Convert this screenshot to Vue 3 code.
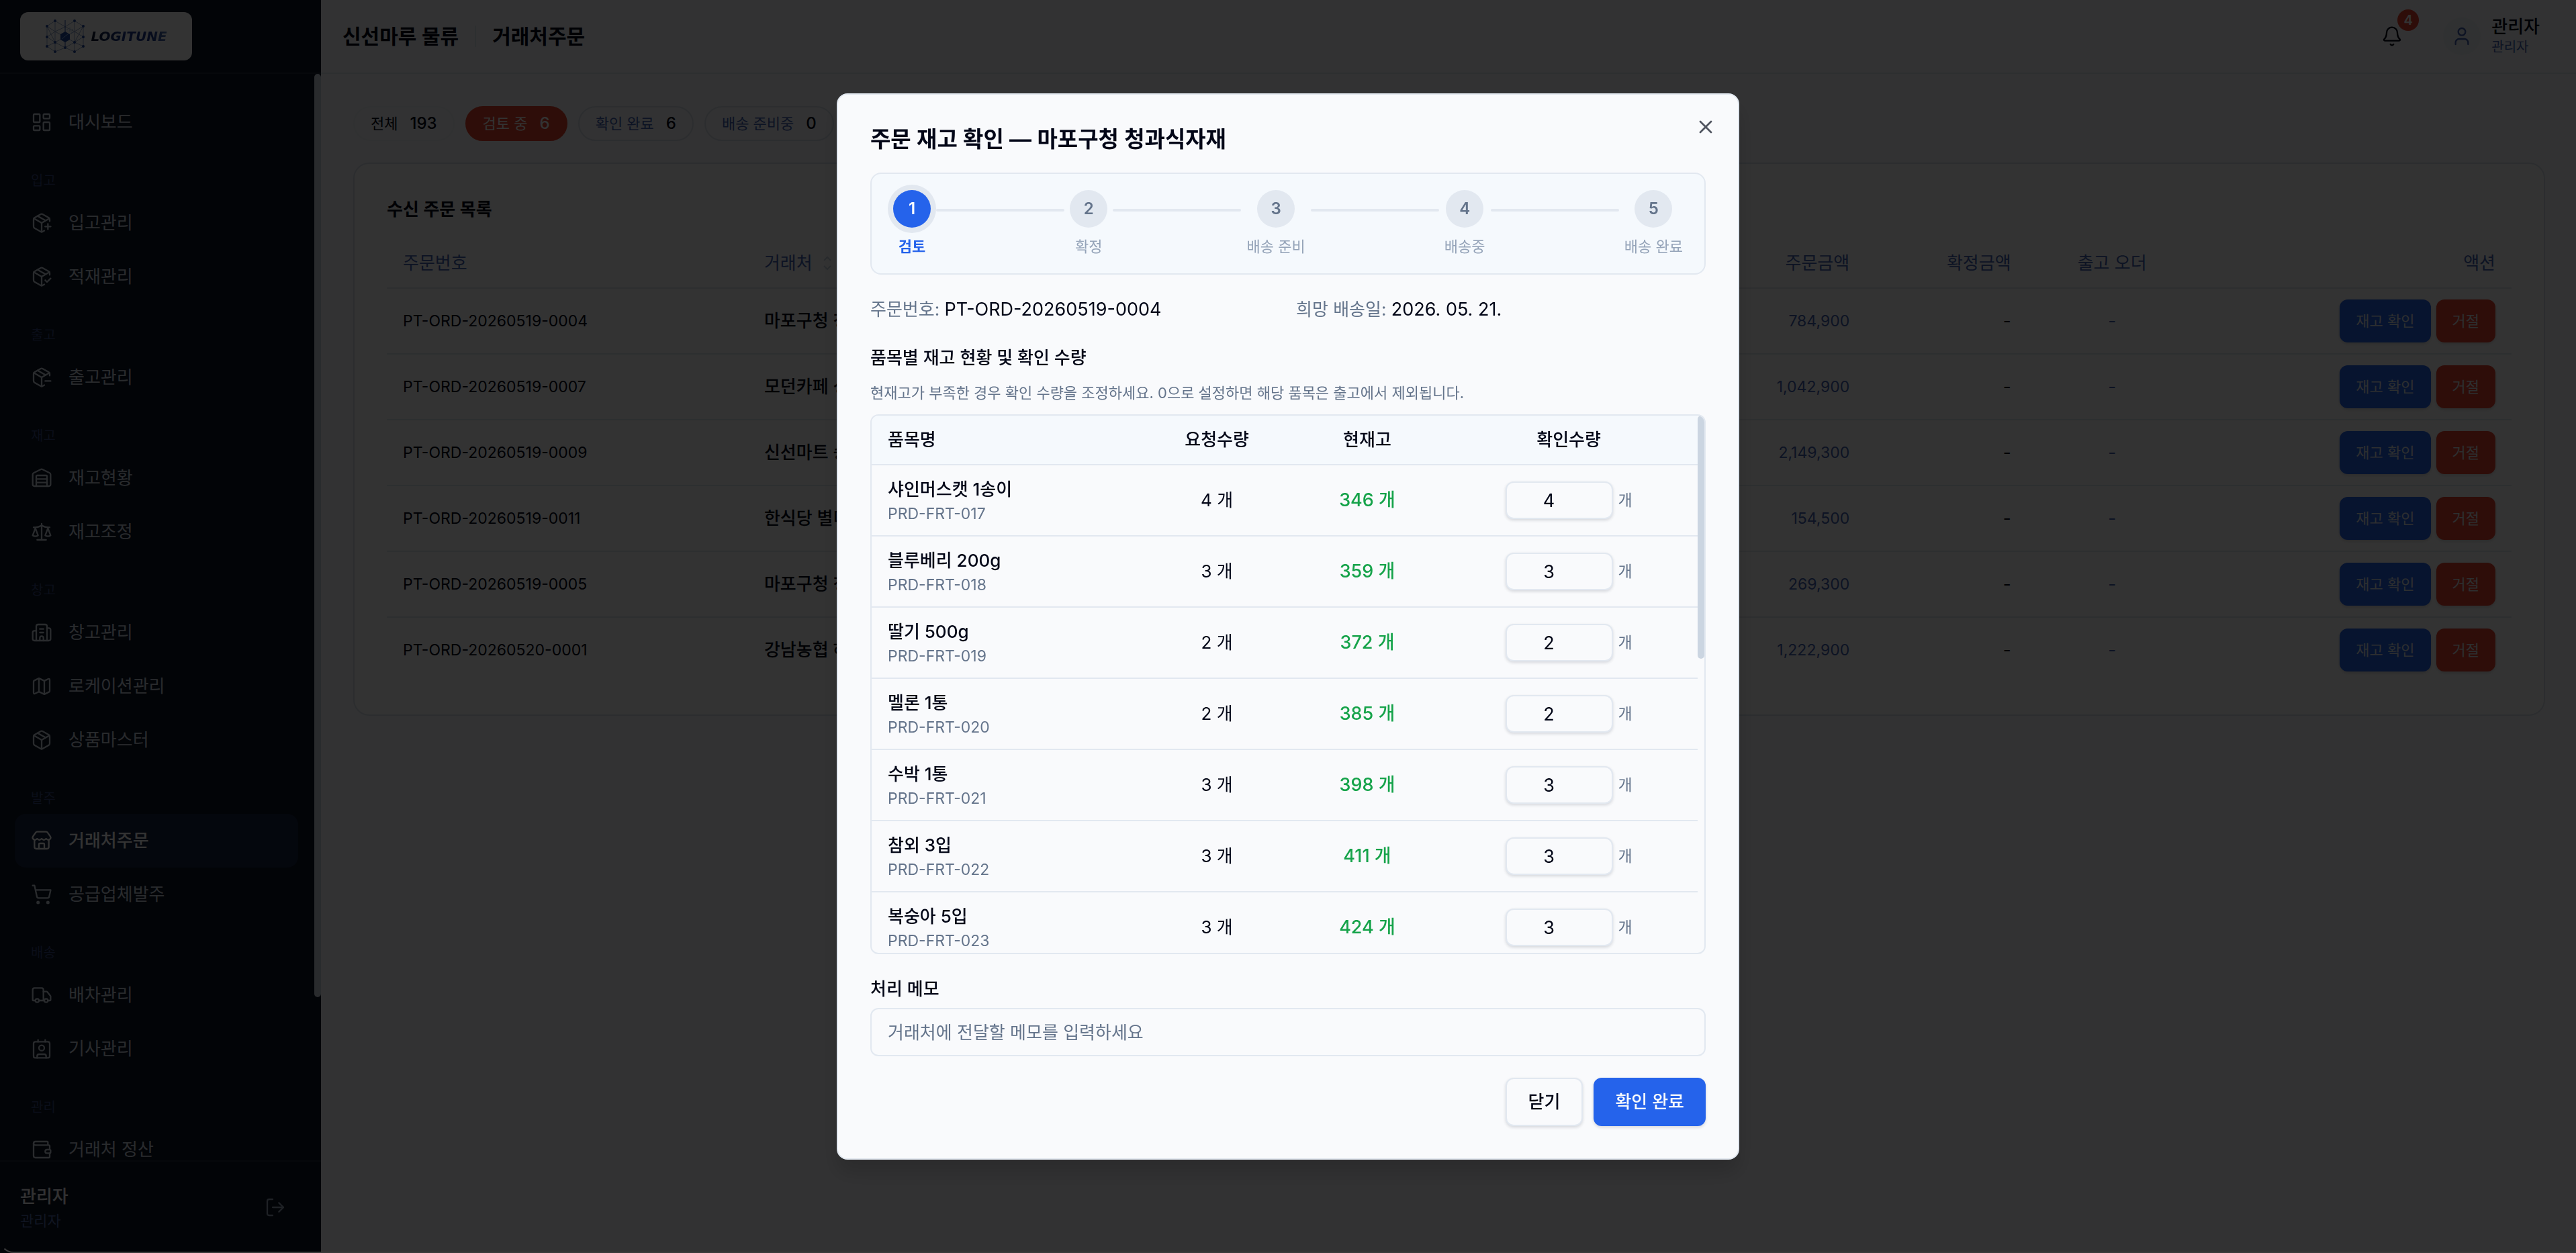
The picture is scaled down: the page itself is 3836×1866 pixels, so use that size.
<template>
  <div class="layout">
    <aside class="sidebar">
      <div class="sidebar-head">
        <a href="#" class="logo" aria-label="LOGITUNE">
          <svg class="logo-mark" viewBox="66 25 60 52" aria-hidden="true">
            <path class="mesh" d="M69 36 81 28 96 37 110 28 123 36V66L110 74 96 68 81 74 69 66ZM69 36 81 44 96 52 110 44 123 36M69 66 81 60 96 52 110 60 123 66M81 28V74M110 28V74M69 36 81 60 96 68 110 60 123 36M69 52 81 44 96 37 110 44 123 52 110 60M69 52 81 60" />
            <path class="spine" d="M96 27V68" />
            <path class="core" d="M96 44 103 48V56L96 60 89 56V48Z" />
            <path class="spark" d="M91 55 101 47M98 41h2M102 39h2M102 43h2M106 41h2M105 45h2" />
            <circle v-for="(node, i) in logoNodes" :key="i" :cx="node[0]" :cy="node[1]" r="2" />
          </svg>
          <span class="logo-text">LOGITUNE</span>
        </a>
      </div>

      <div class="nav-wrap">
        <nav class="nav">
          <div v-for="group in navGroups" :key="group.label" class="nav-group">
            <p v-if="group.label" class="nav-label">{{ group.label }}</p>
            <a
              v-for="item in group.items"
              :key="item.name"
              href="#"
              class="nav-item"
              :class="{ active: item.active }"
            >
              <svg class="icon" viewBox="0 0 24 24" aria-hidden="true">
                <path v-for="d in icons[item.icon]" :key="d" :d="d" />
              </svg>
              <span>{{ item.name }}</span>
            </a>
          </div>
        </nav>
        <div class="nav-scroll"><div class="nav-thumb"></div></div>
      </div>

      <div class="sidebar-foot">
        <div>
          <p class="foot-name">관리자</p>
          <p class="foot-role">관리자</p>
        </div>
        <button type="button" class="logout" aria-label="로그아웃">
          <svg class="icon" viewBox="0 0 24 24"><path v-for="d in icons.logout" :key="d" :d="d" /></svg>
        </button>
      </div>
    </aside>

    <main class="main">
      <header class="topbar">
        <div class="crumbs">
          <strong>신선마루 물류</strong>
          <span class="crumb-line"></span>
          <h1>거래처주문</h1>
        </div>
        <div class="top-actions">
          <button type="button" class="bell" aria-label="알림">
            <svg class="icon" viewBox="0 0 24 24"><path v-for="d in icons.bell" :key="d" :d="d" /></svg>
            <span class="badge">4</span>
          </button>
          <div class="profile">
            <span class="avatar">
              <svg class="icon" viewBox="0 0 24 24"><path v-for="d in icons.user" :key="d" :d="d" /></svg>
            </span>
            <div>
              <p class="profile-name">관리자</p>
              <p class="profile-role">관리자</p>
            </div>
          </div>
        </div>
      </header>

      <div class="content">
        <div class="filters">
          <button
            v-for="filter in filters"
            :key="filter.label"
            type="button"
            class="filter"
            :class="filter.type"
          >
            <span>{{ filter.label }}</span>
            <span class="count">{{ filter.count }}</span>
          </button>
        </div>

        <section class="card">
          <h2 class="card-title">수신 주문 목록</h2>
          <table class="orders">
            <colgroup>
              <col class="c-no" />
              <col />
              <col class="c-amount" />
              <col class="c-amount" />
              <col class="c-out" />
              <col class="c-action" />
            </colgroup>
            <thead>
              <tr>
                <th>주문번호</th>
                <th>
                  <span class="sortable">
                    거래처
                    <svg class="sort" viewBox="0 0 24 24"><path d="m7 16 5 5 5-5" /><path d="m7 8 5-5 5 5" /></svg>
                  </span>
                </th>
                <th class="right">주문금액</th>
                <th class="right">확정금액</th>
                <th class="center">출고 오더</th>
                <th class="right">액션</th>
              </tr>
            </thead>
            <tbody>
              <tr v-for="order in orders" :key="order.no">
                <td class="order-no">{{ order.no }}</td>
                <td class="partner">{{ order.partner }}</td>
                <td class="right amount">{{ order.amount }}</td>
                <td class="right">-</td>
                <td class="center muted">-</td>
                <td>
                  <div class="row-actions">
                    <button type="button" class="btn-small primary">재고 확인</button>
                    <button type="button" class="btn-small danger">거절</button>
                  </div>
                </td>
              </tr>
            </tbody>
          </table>
        </section>
      </div>
    </main>

    <div class="overlay">
      <div class="modal" role="dialog" aria-modal="true" aria-labelledby="modal-title">
        <button type="button" class="close" aria-label="창 닫기">
          <svg class="icon" viewBox="0 0 24 24"><path d="M18 6 6 18" /><path d="m6 6 12 12" /></svg>
        </button>
        <h2 id="modal-title" class="modal-title">주문 재고 확인 — 마포구청 청과식자재</h2>

        <div class="stepper">
          <template v-for="(step, index) in steps" :key="step">
            <div v-if="index > 0" class="step-line"></div>
            <div class="step" :class="{ current: index === 0 }">
              <span class="step-dot">{{ index + 1 }}</span>
              <span class="step-label">{{ step }}</span>
            </div>
          </template>
        </div>

        <div class="info">
          <p>주문번호: <span class="value">PT-ORD-20260519-0004</span></p>
          <p>희망 배송일: <span class="value">2026. 05. 21.</span></p>
        </div>

        <h3 class="section-title">품목별 재고 현황 및 확인 수량</h3>
        <p class="section-desc">
          현재고가 부족한 경우 확인 수량을 조정하세요. 0으로 설정하면 해당 품목은 출고에서 제외됩니다.
        </p>

        <div class="stock-box">
          <table class="stock">
            <colgroup>
              <col class="s-name" />
              <col class="s-req" />
              <col class="s-now" />
              <col class="s-qty" />
            </colgroup>
            <thead>
              <tr>
                <th class="left">품목명</th>
                <th>요청수량</th>
                <th>현재고</th>
                <th>확인수량</th>
              </tr>
            </thead>
            <tbody>
              <tr v-for="item in items" :key="item.code">
                <td class="left">
                  <p class="item-name">{{ item.name }}</p>
                  <p class="item-code">{{ item.code }}</p>
                </td>
                <td>{{ item.requested }} 개</td>
                <td class="in-stock">{{ item.stock }} 개</td>
                <td>
                  <div class="qty">
                    <input
                      v-model="item.confirmed"
                      type="text"
                      inputmode="numeric"
                      :aria-label="item.name + ' 확인수량'"
                    />
                    <span>개</span>
                  </div>
                </td>
              </tr>
            </tbody>
          </table>
          <div class="stock-scroll"><div class="stock-thumb"></div></div>
        </div>

        <label class="memo-label" for="memo">처리 메모</label>
        <input id="memo" v-model="memo" class="memo" type="text" placeholder="거래처에 전달할 메모를 입력하세요" />

        <div class="modal-actions">
          <button type="button" class="btn outline">닫기</button>
          <button type="button" class="btn primary">확인 완료</button>
        </div>
      </div>
    </div>
  </div>
</template>

<script setup>
import { ref } from 'vue';

const boxOpen = 'M21 10V8a2 2 0 0 0-1-1.73l-7-4a2 2 0 0 0-2 0l-7 4A2 2 0 0 0 3 8v8a2 2 0 0 0 1 1.73l7 4a2 2 0 0 0 2 0l2-1.14';
const boxLines = ['m7.5 4.27 9 5.15', 'M3.29 7 12 12l8.71-5', 'M12 22V12'];

const icons = {
  dashboard: [
    'M4 3h5a1 1 0 0 1 1 1v7a1 1 0 0 1-1 1H4a1 1 0 0 1-1-1V4a1 1 0 0 1 1-1z',
    'M15 3h5a1 1 0 0 1 1 1v3a1 1 0 0 1-1 1h-5a1 1 0 0 1-1-1V4a1 1 0 0 1 1-1z',
    'M15 12h5a1 1 0 0 1 1 1v7a1 1 0 0 1-1 1h-5a1 1 0 0 1-1-1v-7a1 1 0 0 1 1-1z',
    'M4 16h5a1 1 0 0 1 1 1v3a1 1 0 0 1-1 1H4a1 1 0 0 1-1-1v-3a1 1 0 0 1 1-1z',
  ],
  boxPlus: ['M16 16h6', 'M19 13v6', boxOpen, ...boxLines],
  boxCheck: ['m16 16 2 2 4-4', boxOpen, ...boxLines],
  boxMinus: ['M16 16h6', boxOpen, ...boxLines],
  box: [
    'M11 21.73a2 2 0 0 0 2 0l7-4A2 2 0 0 0 21 16V8a2 2 0 0 0-1-1.73l-7-4a2 2 0 0 0-2 0l-7 4A2 2 0 0 0 3 8v8a2 2 0 0 0 1 1.73z',
    ...boxLines,
  ],
  warehouse: [
    'M18 21V10a1 1 0 0 0-1-1H7a1 1 0 0 0-1 1v11',
    'M22 19a2 2 0 0 1-2 2H4a2 2 0 0 1-2-2V8a2 2 0 0 1 1.132-1.803l7.95-3.974a2 2 0 0 1 1.837 0l7.948 3.974A2 2 0 0 1 22 8z',
    'M6 13h12',
    'M6 17h12',
  ],
  scale: [
    'm16 16 3-8 3 8c-.87.65-1.92 1-3 1s-2.13-.35-3-1Z',
    'm2 16 3-8 3 8c-.87.65-1.92 1-3 1s-2.13-.35-3-1Z',
    'M7 21h10',
    'M12 3v18',
    'M3 7h2c2 0 5-1 7-2 2 1 5 2 7 2h2',
  ],
  building: [
    'M10 12h4',
    'M10 8h4',
    'M14 21v-3a2 2 0 0 0-4 0v3',
    'M6 10H4a2 2 0 0 0-2 2v7a2 2 0 0 0 2 2h16a2 2 0 0 0 2-2V9a2 2 0 0 0-2-2h-2',
    'M6 21V5a2 2 0 0 1 2-2h8a2 2 0 0 1 2 2v16',
  ],
  map: [
    'M14.106 5.553a2 2 0 0 0 1.788 0l3.659-1.83A1 1 0 0 1 21 4.619v12.764a1 1 0 0 1-.553.894l-4.553 2.277a2 2 0 0 1-1.788 0l-4.212-2.106a2 2 0 0 0-1.788 0l-3.659 1.83A1 1 0 0 1 3 19.381V6.618a1 1 0 0 1 .553-.894l4.553-2.277a2 2 0 0 1 1.788 0z',
    'M15 5.764v15',
    'M9 3.236v15',
  ],
  store: [
    'M15 21v-5a1 1 0 0 0-1-1h-4a1 1 0 0 0-1 1v5',
    'M17.774 10.31a1.12 1.12 0 0 0-1.549 0 2.5 2.5 0 0 1-3.451 0 1.12 1.12 0 0 0-1.548 0 2.5 2.5 0 0 1-3.452 0 1.12 1.12 0 0 0-1.549 0 2.5 2.5 0 0 1-3.77-3.248l2.889-4.184A2 2 0 0 1 7 2h10a2 2 0 0 1 1.653.873l2.895 4.192a2.5 2.5 0 0 1-3.774 3.244',
    'M4 10.95V19a2 2 0 0 0 2 2h12a2 2 0 0 0 2-2v-8.05',
  ],
  cart: [
    'M7 21a1 1 0 1 0 2 0 1 1 0 1 0-2 0',
    'M18 21a1 1 0 1 0 2 0 1 1 0 1 0-2 0',
    'M2.05 2.05h2l2.66 12.42a2 2 0 0 0 2 1.58h9.78a2 2 0 0 0 1.95-1.57l1.65-7.43H5.12',
  ],
  truck: [
    'M14 18V6a2 2 0 0 0-2-2H4a2 2 0 0 0-2 2v11a1 1 0 0 0 1 1h2',
    'M15 18H9',
    'M19 18h2a1 1 0 0 0 1-1v-3.65a1 1 0 0 0-.22-.624l-3.48-4.35A1 1 0 0 0 17.52 8H14',
    'M15 18a2 2 0 1 0 4 0 2 2 0 1 0-4 0',
    'M5 18a2 2 0 1 0 4 0 2 2 0 1 0-4 0',
  ],
  driver: [
    'M16 2v2',
    'M8 2v2',
    'M7 22v-2a2 2 0 0 1 2-2h6a2 2 0 0 1 2 2v2',
    'M9 11a3 3 0 1 0 6 0 3 3 0 1 0-6 0',
    'M5 4h14a2 2 0 0 1 2 2v14a2 2 0 0 1-2 2H5a2 2 0 0 1-2-2V6a2 2 0 0 1 2-2z',
  ],
  wallet: [
    'M19 7V4a1 1 0 0 0-1-1H5a2 2 0 0 0 0 4h15a1 1 0 0 1 1 1v4h-3a2 2 0 0 0 0 4h3a1 1 0 0 0 1-1v-2a1 1 0 0 0-1-1',
    'M3 5v14a2 2 0 0 0 2 2h15a1 1 0 0 0 1-1v-4',
  ],
  logout: ['m16 17 5-5-5-5', 'M21 12H9', 'M9 21H5a2 2 0 0 1-2-2V5a2 2 0 0 1 2-2h4'],
  bell: [
    'M10.268 21a2 2 0 0 0 3.464 0',
    'M3.262 15.326A1 1 0 0 0 4 17h16a1 1 0 0 0 .74-1.673C19.41 13.956 18 12.499 18 8A6 6 0 0 0 6 8c0 4.499-1.411 5.956-2.738 7.326',
  ],
  user: ['M19 21v-2a4 4 0 0 0-4-4H9a4 4 0 0 0-4 4v2', 'M8 7a4 4 0 1 0 8 0 4 4 0 1 0-8 0'],
};

const logoNodes = [
  [69, 36], [81, 28], [110, 28], [123, 36], [69, 52], [123, 52],
  [69, 66], [81, 74], [96, 68], [110, 74], [123, 66], [81, 60], [110, 60],
];

const navGroups = [
  { label: '', items: [{ name: '대시보드', icon: 'dashboard' }] },
  {
    label: '입고',
    items: [
      { name: '입고관리', icon: 'boxPlus' },
      { name: '적재관리', icon: 'boxCheck' },
    ],
  },
  { label: '출고', items: [{ name: '출고관리', icon: 'boxMinus' }] },
  {
    label: '재고',
    items: [
      { name: '재고현황', icon: 'warehouse' },
      { name: '재고조정', icon: 'scale' },
    ],
  },
  {
    label: '창고',
    items: [
      { name: '창고관리', icon: 'building' },
      { name: '로케이션관리', icon: 'map' },
      { name: '상품마스터', icon: 'box' },
    ],
  },
  {
    label: '발주',
    items: [
      { name: '거래처주문', icon: 'store', active: true },
      { name: '공급업체발주', icon: 'cart' },
    ],
  },
  {
    label: '배송',
    items: [
      { name: '배차관리', icon: 'truck' },
      { name: '기사관리', icon: 'driver' },
    ],
  },
  { label: '관리', items: [{ name: '거래처 정산', icon: 'wallet' }] },
];

const filters = [
  { label: '전체', count: 193, type: 'all' },
  { label: '검토 중', count: 6, type: 'selected' },
  { label: '확인 완료', count: 6, type: '' },
  { label: '배송 준비중', count: 0, type: '' },
];

const orders = [
  { no: 'PT-ORD-20260519-0004', partner: '마포구청 청과', amount: '784,900' },
  { no: 'PT-ORD-20260519-0007', partner: '모던카페 성수', amount: '1,042,900' },
  { no: 'PT-ORD-20260519-0009', partner: '신선마트 송파', amount: '2,149,300' },
  { no: 'PT-ORD-20260519-0011', partner: '한식당 별미', amount: '154,500' },
  { no: 'PT-ORD-20260519-0005', partner: '마포구청 청과', amount: '269,300' },
  { no: 'PT-ORD-20260520-0001', partner: '강남농협 하나', amount: '1,222,900' },
];

const steps = ['검토', '확정', '배송 준비', '배송중', '배송 완료'];

const items = ref([
  { name: '샤인머스캣 1송이', code: 'PRD-FRT-017', requested: 4, stock: 346, confirmed: 4 },
  { name: '블루베리 200g', code: 'PRD-FRT-018', requested: 3, stock: 359, confirmed: 3 },
  { name: '딸기 500g', code: 'PRD-FRT-019', requested: 2, stock: 372, confirmed: 2 },
  { name: '멜론 1통', code: 'PRD-FRT-020', requested: 2, stock: 385, confirmed: 2 },
  { name: '수박 1통', code: 'PRD-FRT-021', requested: 3, stock: 398, confirmed: 3 },
  { name: '참외 3입', code: 'PRD-FRT-022', requested: 3, stock: 411, confirmed: 3 },
  { name: '복숭아 5입', code: 'PRD-FRT-023', requested: 3, stock: 424, confirmed: 3 },
]);

const memo = ref('');
</script>

<style>
body {
  margin: 0;
  background: #f8fafc;
}
</style>

<style scoped>
.layout {
  display: flex;
  height: 100vh;
  overflow: hidden;
  font-family: Inter, "Noto Sans CJK KR", sans-serif;
  font-size: 26px;
  line-height: 40px;
  color: #020617;
  background: #f8fafc;
}

.layout *,
.layout *::before {
  box-sizing: border-box;
}

p,
h1,
h2,
h3 {
  margin: 0;
}

a {
  color: inherit;
  text-decoration: none;
}

button,
input {
  font: inherit;
  color: inherit;
}

button {
  padding: 0;
  border: 0;
  background: none;
  cursor: pointer;
}

table {
  border-collapse: separate;
  border-spacing: 0;
  table-layout: fixed;
}

.icon {
  display: block;
  flex: none;
  width: 32px;
  height: 32px;
  fill: none;
  stroke: currentColor;
  stroke-width: 1.75;
  stroke-linecap: round;
  stroke-linejoin: round;
}

/* 사이드바 */
.sidebar {
  display: flex;
  flex: none;
  flex-direction: column;
  width: 478px;
  color: #cbd5e1;
  background: #0d1424;
}

.sidebar-head {
  display: flex;
  align-items: center;
  height: 110px;
  padding: 0 30px;
  border-bottom: 2px solid #1e293b;
}

.logo {
  display: flex;
  align-items: center;
  justify-content: center;
  gap: 8px;
  width: 256px;
  height: 72px;
  border-radius: 12px;
  background: #fff;
}

.logo-mark {
  width: 60px;
  height: 52px;
  fill: #2048a0;
}

.mesh {
  fill: none;
  stroke: #8fa3c8;
  stroke-width: 1;
}

.spine,
.spark {
  fill: none;
  stroke: #2048a0;
  stroke-width: 1;
}

.spark {
  stroke: #8fb4e8;
}

.logo-text {
  font-family: "DejaVu Sans", sans-serif;
  font-size: 20px;
  font-style: italic;
  font-weight: 700;
  line-height: 24px;
  color: transparent;
  background: linear-gradient(90deg, #0f172a 0%, #1e3a8a 40%, #1e3a8a 80%, #5b7bb5 100%);
  background-clip: text;
}

.nav-wrap {
  display: flex;
  flex: 1;
  min-height: 0;
  overflow: hidden;
}

.nav {
  flex: 1;
  padding: 32px 24px 0 22px;
}

.nav-label {
  margin: 32px 0 8px;
  padding: 0 24px;
  font-size: 20px;
  line-height: 30px;
  color: #35477c;
}

.nav-item {
  display: flex;
  align-items: center;
  gap: 24px;
  height: 80px;
  padding: 0 24px;
  border-radius: 16px;
}

.nav-item.active {
  font-weight: 500;
  color: #fff;
  background: #162340;
}

.nav-scroll {
  width: 10px;
}

.nav-thumb {
  height: 85%;
  border-radius: 5px;
  background: #cbd5e1;
}

.sidebar-foot {
  display: flex;
  align-items: center;
  justify-content: space-between;
  padding: 32px 52px 32px 30px;
  border-top: 2px solid #1e293b;
}

.foot-name {
  font-weight: 500;
  color: #f8fafc;
}

.foot-role {
  font-size: 22px;
  line-height: 32px;
  color: #4f68a8;
}

.logout {
  color: #94a3b8;
}

/* 상단 바 */
.main {
  flex: 1;
  min-width: 0;
}

.topbar {
  display: flex;
  align-items: center;
  justify-content: space-between;
  height: 110px;
  padding: 0 54px 0 32px;
  border-bottom: 2px solid #e2e8f0;
}

.crumbs {
  display: flex;
  align-items: center;
  gap: 24px;
  font-size: 30px;
}

.crumbs strong,
.crumbs h1 {
  font-size: 30px;
  font-weight: 600;
}

.crumb-line {
  width: 2px;
  height: 32px;
  background: #e2e8f0;
}

.top-actions {
  display: flex;
  align-items: center;
  gap: 60px;
}

.bell {
  position: relative;
}

.badge {
  position: absolute;
  top: -24px;
  right: -24px;
  width: 32px;
  height: 32px;
  border-radius: 50%;
  font-size: 20px;
  font-weight: 600;
  line-height: 32px;
  text-align: center;
  color: #fff;
  background: #e5432d;
}

.profile {
  display: flex;
  align-items: center;
  gap: 16px;
}

.avatar {
  display: flex;
  align-items: center;
  justify-content: center;
  width: 56px;
  height: 56px;
  border-radius: 50%;
  color: #415fb0;
  background: #f1f5f9;
}

.profile-name {
  font-weight: 500;
  line-height: 32px;
}

.profile-role {
  font-size: 20px;
  line-height: 28px;
  color: #415fb0;
}

/* 본문 */
.content {
  padding: 48px 46px 48px 48px;
}

.filters {
  display: flex;
  gap: 16px;
}

.filter {
  display: flex;
  align-items: center;
  gap: 18px;
  height: 52px;
  padding: 0 24px;
  border: 2px solid #dbe2ec;
  border-radius: 26px;
  font-size: 22px;
  color: #415fb0;
}

.filter .count {
  font-size: 24px;
  font-weight: 500;
  color: #020617;
}

.filter.all {
  border-color: #f1f5f9;
  color: #020617;
}

.filter.selected,
.filter.selected .count {
  color: #fff;
}

.filter.selected {
  border-color: #e5432d;
  background: #e5432d;
}

.card {
  margin-top: 32px;
  padding: 48px;
  border: 2px solid #dbe2ec;
  border-radius: 24px;
  background: #fff;
}

.card-title {
  margin-bottom: 24px;
  font-size: 26px;
  font-weight: 600;
}

.orders {
  width: 100%;
}

.c-no {
  width: 17%;
}

.c-amount {
  width: 7.6%;
}

.c-out {
  width: 8%;
}

.c-action {
  width: 14.8%;
}

.orders th,
.orders td {
  padding: 0 24px;
  border-bottom: 2px solid #e2e8f0;
  text-align: left;
}

.orders th {
  height: 74px;
  font-weight: 400;
  color: #415fb0;
}

.orders td {
  height: 98px;
}

.orders tbody tr:last-child td {
  height: 96px;
  border-bottom: 0;
}

.orders .right {
  text-align: right;
}

.orders .center {
  text-align: center;
}

.sortable {
  display: flex;
  align-items: center;
  gap: 10px;
}

.sort {
  width: 24px;
  height: 24px;
  fill: none;
  stroke: #cbd5e1;
  stroke-width: 2;
}

.order-no,
.orders .amount {
  font-size: 23px;
}

.partner {
  font-weight: 500;
  white-space: nowrap;
}

.orders .amount,
.orders .muted {
  color: #415fb0;
}

.row-actions {
  display: flex;
  justify-content: flex-end;
  gap: 8px;
}

.btn-small {
  height: 64px;
  padding: 0 24px;
  border-radius: 12px;
  font-size: 22px;
  color: #e2e8f0;
  box-shadow: 0 2px 4px rgba(0, 0, 0, 0.15);
}

.primary {
  background: #2563eb;
}

.danger {
  background: #e5432d;
}

/* 모달 */
.overlay {
  position: fixed;
  inset: 0;
  display: flex;
  align-items: center;
  justify-content: center;
  background: rgba(0, 0, 0, 0.8);
}

/* 창 아래쪽 모서리 선 */
.overlay::before {
  content: "";
  position: absolute;
  inset: auto 0 0 0;
  height: 40px;
  border-bottom: 2px solid #3a3a3a;
  border-left: 2px solid transparent;
  border-bottom-left-radius: 20px;
}

.modal {
  position: relative;
  width: 1344px;
  max-width: 100%;
  padding: 48px;
  border: 2px solid #e2e8f0;
  border-radius: 16px;
  background: #f9fafc;
  box-shadow: 0 20px 30px rgba(0, 0, 0, 0.15);
}

.close {
  position: absolute;
  top: 32px;
  right: 32px;
  color: #505560;
}

.close .icon {
  stroke-width: 2;
}

.modal-title {
  margin-bottom: 32px;
  font-size: 33px;
  font-weight: 600;
  line-height: 36px;
}

.stepper {
  display: flex;
  align-items: flex-start;
  gap: 8px;
  padding: 24px 32px;
  border: 2px solid #e2e8f0;
  border-radius: 16px;
  background: #f5f9fd;
}

.step {
  display: flex;
  flex-direction: column;
  align-items: center;
  gap: 12px;
}

.step-dot {
  width: 56px;
  height: 56px;
  border-radius: 50%;
  font-size: 24px;
  font-weight: 600;
  line-height: 56px;
  text-align: center;
  color: #64748b;
  background: #e2e8f0;
}

.step-label {
  font-size: 22px;
  line-height: 32px;
  color: #94a3b8;
}

.step.current .step-dot {
  color: #fff;
  background: #2563eb;
  box-shadow: 0 0 0 8px #e2e8f0;
}

.step.current .step-label {
  font-weight: 600;
  color: #2563eb;
}

.step-line {
  flex: 1;
  height: 4px;
  margin-top: 28px;
  border-radius: 2px;
  background: #e2e8f0;
}

.info {
  display: grid;
  grid-template-columns: 1fr 1fr;
  gap: 24px;
  margin: 32px 0;
  color: #64748b;
}

.info .value {
  font-size: 27px;
  color: #020617;
}

.section-title {
  font-size: 26px;
  font-weight: 500;
}

.section-desc {
  margin: 16px 0;
  font-size: 22px;
  line-height: 32px;
  color: #64748b;
}

.stock-box {
  display: flex;
  height: 804px;
  overflow: hidden;
  border: 2px solid #e2e8f0;
  border-radius: 12px;
}

.stock {
  flex: 1;
  height: fit-content;
}

.s-name {
  width: 32.4%;
}

.s-req {
  width: 18.8%;
}

.s-now {
  width: 17.6%;
}

.s-qty {
  width: 31.2%;
}

.stock th,
.stock td {
  padding: 0 24px;
  border-bottom: 2px solid #e2e8f0;
  text-align: center;
}

.stock th {
  height: 74px;
  font-weight: 500;
  background: #f5f9fd;
}

.stock td {
  height: 106px;
}

.stock .left {
  text-align: left;
}

.item-name {
  font-weight: 500;
}

.item-code {
  font-size: 23px;
  line-height: 32px;
  color: #64748b;
}

.stock .in-stock {
  font-size: 27px;
  font-weight: 500;
  color: #16a34a;
}

.qty {
  display: flex;
  align-items: center;
  justify-content: center;
  gap: 8px;
}

.qty input {
  width: 160px;
  height: 56px;
  padding: 0 44px 0 14px;
  border: 2px solid #e2e8f0;
  border-radius: 12px;
  font-size: 27px;
  text-align: center;
  background: #f9fafc;
  box-shadow: 0 2px 4px rgba(15, 23, 42, 0.15);
}

.qty span {
  font-size: 23px;
  color: #64748b;
}

.stock-scroll {
  width: 10px;
}

.stock-thumb {
  height: 362px;
  border-radius: 5px;
  background: #cbd5e1;
}

.memo-label {
  display: block;
  margin: 32px 0 8px;
  font-weight: 500;
}

.memo {
  display: block;
  width: 100%;
  height: 72px;
  padding: 0 24px;
  border: 2px solid #e2e8f0;
  border-radius: 12px;
  background: #f9fafc;
}

.memo::placeholder {
  color: #64748b;
  opacity: 1;
}

.modal-actions {
  display: flex;
  justify-content: flex-end;
  gap: 16px;
  margin-top: 32px;
}

.btn {
  height: 72px;
  padding: 0 32px;
  border-radius: 12px;
  font-weight: 500;
  box-shadow: 0 2px 4px rgba(15, 23, 42, 0.15);
}

.btn.outline {
  border: 2px solid #e2e8f0;
  background: #f9fafc;
}

.btn.primary {
  color: #f8fafc;
  background: #2563eb;
}
</style>
